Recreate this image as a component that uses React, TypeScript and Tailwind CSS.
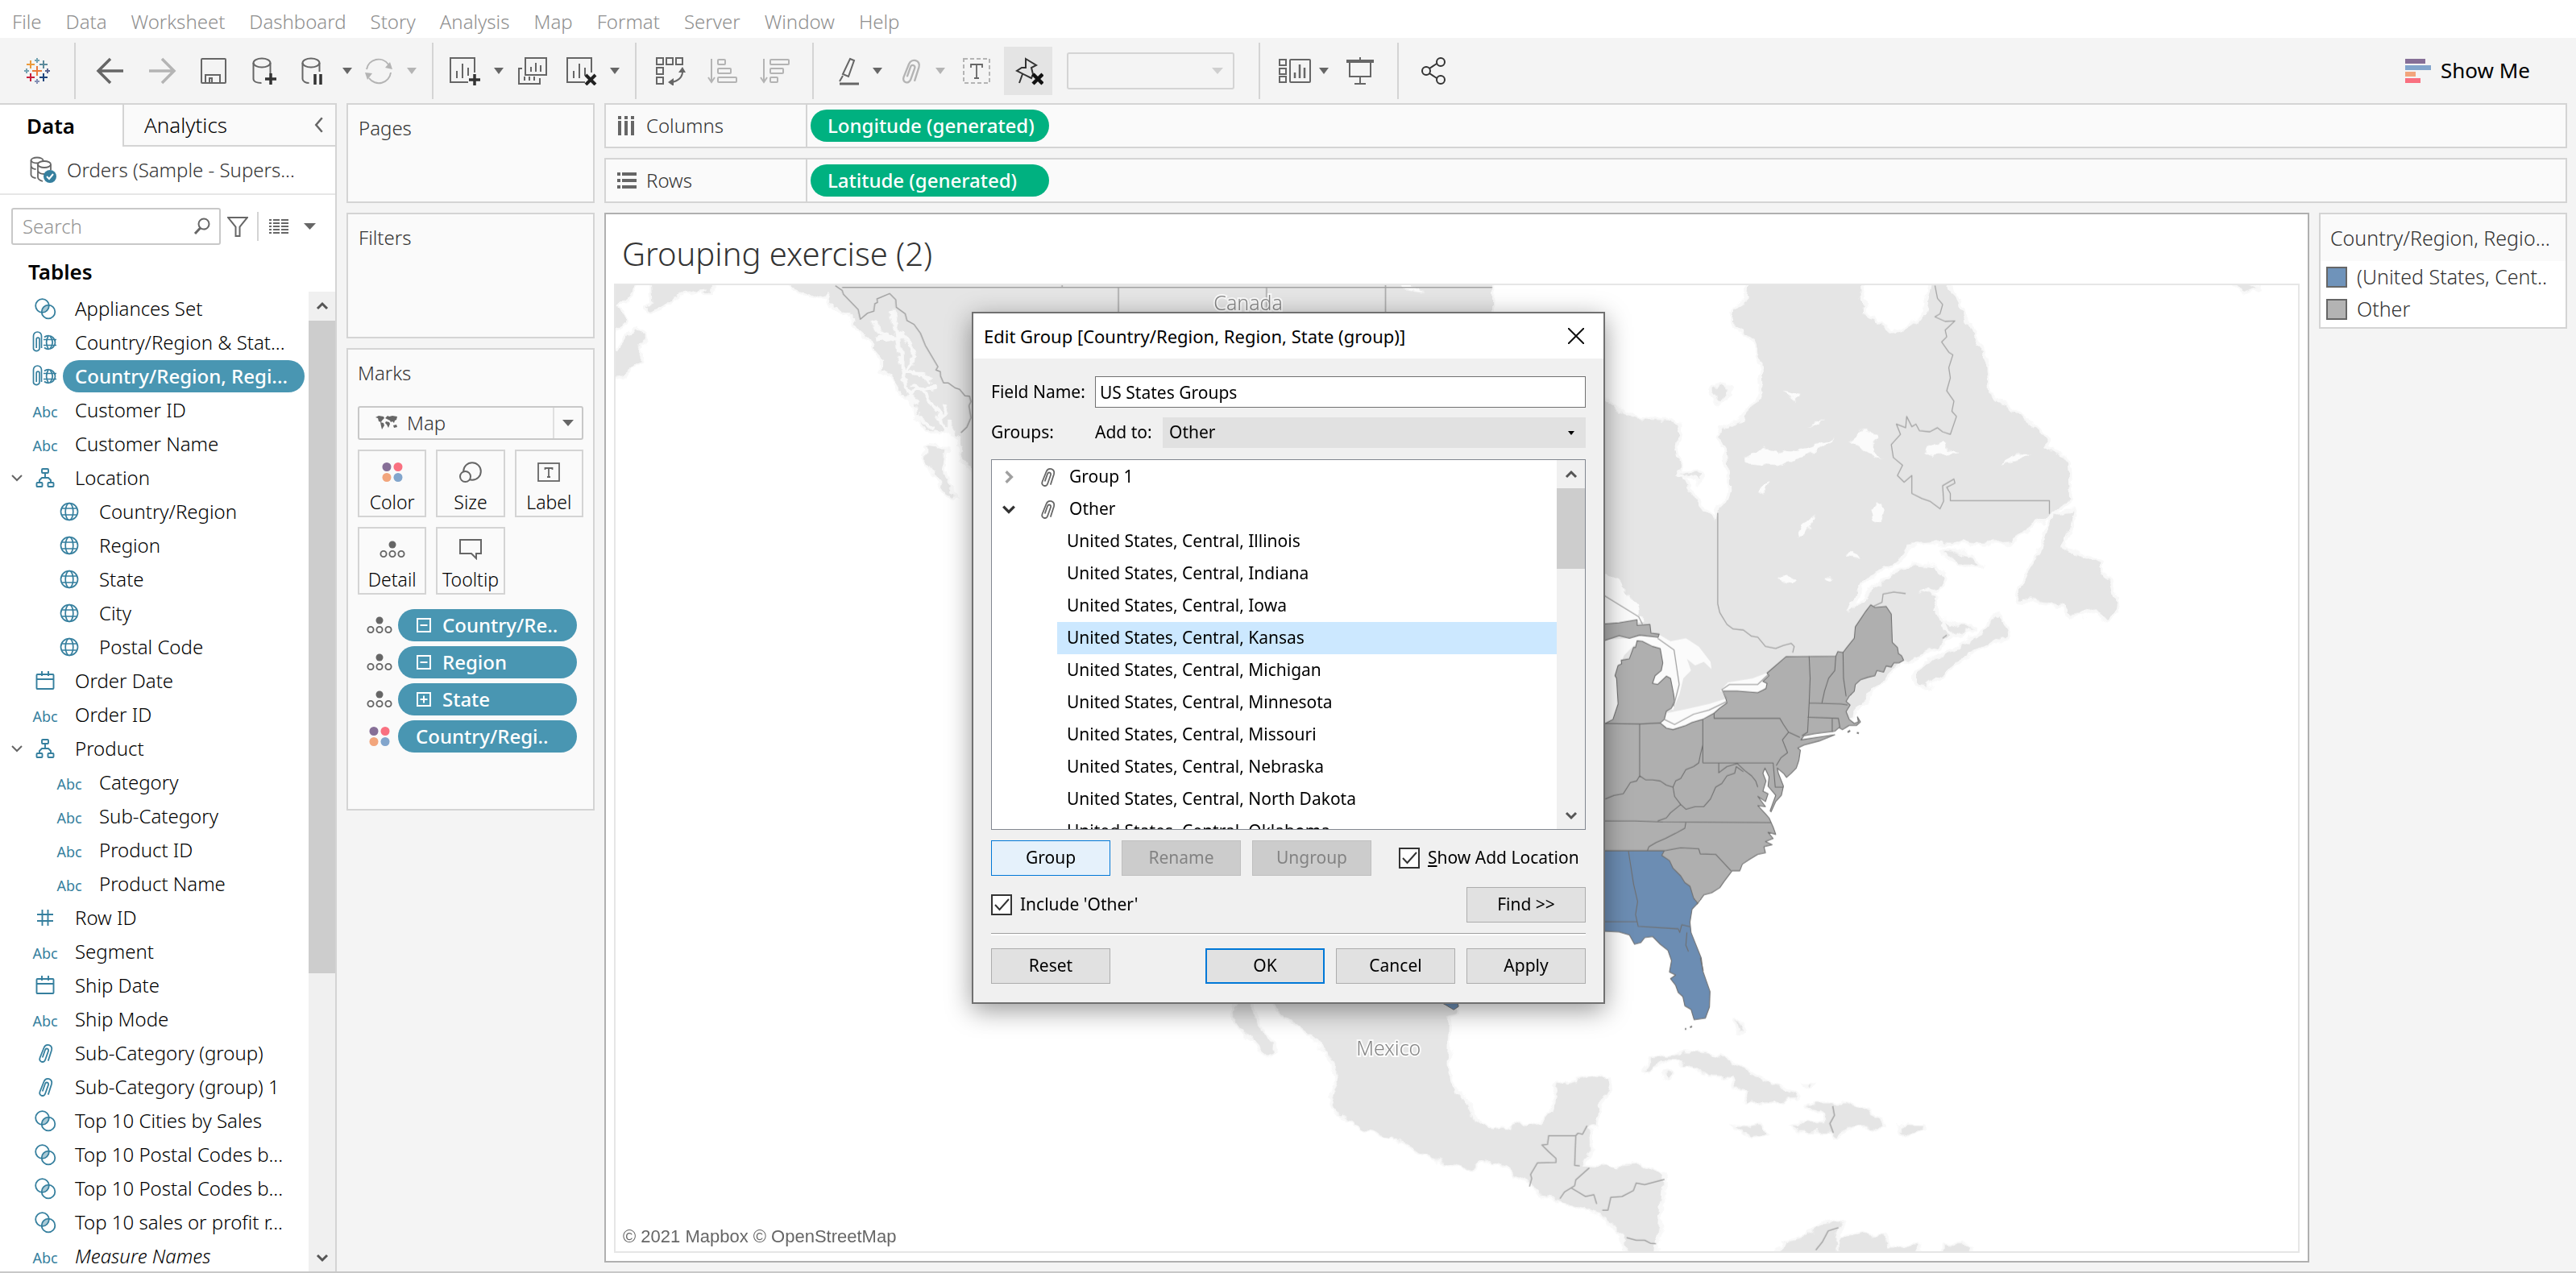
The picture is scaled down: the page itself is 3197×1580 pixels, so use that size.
import type { ReactNode } from "react";

const TEAL = "#357f9e";
const INK = "#666666";
const DIM = "#b4b4b4";

/* ---------- small shared drawings ---------- */

function Caret({ color = INK, w = 12 }: { color?: string; w?: number }) {
  return (
    <svg width={w} height="8" viewBox="0 0 12 8" preserveAspectRatio="none" className="shrink-0">
      <path d="M0 0h12L6 8z" fill={color} />
    </svg>
  );
}

function Chevron({ dir, color = "#555", size = 16, sw = 3 }: { dir: "up" | "down" | "left" | "right"; color?: string; size?: number; sw?: number }) {
  const d = { up: "M2 11l6-6 6 6", down: "M2 5l6 6 6-6", left: "M11 1L5 8l6 7", right: "M5 2l6 6-6 6" }[dir];
  return (
    <svg width={size} height={size} viewBox="0 0 16 16" className="shrink-0">
      <path d={d} fill="none" stroke={color} strokeWidth={sw} />
    </svg>
  );
}

function Clip({ color, size = 26 }: { color: string; size?: number }) {
  return (
    <svg width={size} height={size} viewBox="0 0 26 26" fill="none" stroke={color} strokeWidth="1.800" strokeLinecap="round">
      <path d="M17 22l4-12.500c2-7-7-9-9.500-3L6.500 19c-1.800 5 5 7 6.700 2.200L17 10.500c1-3-3-4.200-4-1.200l-3 8.500" />
    </svg>
  );
}

function Globe({ size = 24 }: { size?: number }) {
  return (
    <svg width={size} height={size} viewBox="0 0 24 24" fill="none" stroke={TEAL} strokeWidth="1.700">
      <circle cx="12" cy="12" r="10.500" />
      <ellipse cx="12" cy="12" rx="4.800" ry="10.500" />
      <path d="M2.500 8h19M2.500 16h19" />
    </svg>
  );
}

function SetIcon() {
  return (
    <svg width="28" height="28" viewBox="0 0 28 28" fill="none" stroke={TEAL} strokeWidth="1.800">
      <path d="M9.700 18.300A8.300 8.300 0 0 1 18.300 9.700A8.300 8.300 0 0 1 9.700 18.300z" fill="#a9c9d6" stroke="none" />
      <circle cx="10.500" cy="10.500" r="8.300" />
      <circle cx="18" cy="18" r="8.300" />
    </svg>
  );
}

function GeoGroup() {
  return (
    <svg width="32" height="28" viewBox="0 0 32 28" fill="none" stroke={TEAL} strokeWidth="1.700">
      <path d="M11.500 21V6a5 5 0 0 0-10 0v16a4 4 0 0 0 7.500 0V10a1.800 1.800 0 0 0-3.800 0v11" />
      <path d="M15 7.500a8.300 8.300 0 1 1 0 13M14 10.500h16M14 17.500h16" />
      <path d="M20 6c-3 5-3 11 0 16M22 6c4 5 4 11 0 16" />
    </svg>
  );
}

function Hierarchy() {
  return (
    <svg width="24" height="24" viewBox="0 0 24 24" fill="none" stroke={TEAL} strokeWidth="1.900">
      <rect x="8" y="1" width="8" height="5" rx="1" />
      <rect x="1.500" y="18" width="7" height="5" rx="1" />
      <rect x="15.500" y="18" width="7" height="5" rx="1" />
      <path d="M12 6v6M5 18v-3l3-3h8l3 3v3" />
    </svg>
  );
}

function CalendarIcon() {
  return (
    <svg width="24" height="24" viewBox="0 0 24 24" fill="none" stroke={TEAL} strokeWidth="1.900">
      <rect x="1.500" y="4" width="21" height="18" rx="1" />
      <path d="M1.500 10h21M8 0v6M16 0v6" />
    </svg>
  );
}

function HashIcon() {
  return (
    <svg width="22" height="22" viewBox="0 0 22 22" fill="none" stroke={TEAL} strokeWidth="1.900">
      <path d="M1 7h20M1 15h20M7.500 1v20M14.500 1v20" />
    </svg>
  );
}

function DetailIcon() {
  return (
    <svg width="32" height="22" viewBox="0 0 32 22" fill="none" stroke={INK} strokeWidth="1.900" className="shrink-0">
      <circle cx="16" cy="5" r="4.500" fill={INK} stroke="none" />
      <circle cx="5" cy="16.500" r="3.600" />
      <circle cx="16" cy="16.500" r="3.600" />
      <circle cx="27" cy="16.500" r="3.600" />
    </svg>
  );
}

function ColorDots() {
  return (
    <svg width="26" height="24" viewBox="0 0 26 24" className="shrink-0">
      <circle cx="6" cy="5.500" r="5.500" fill="#866f97" />
      <circle cx="20" cy="5.500" r="5.500" fill="#f97080" />
      <circle cx="6" cy="18.500" r="5.500" fill="#f2a57c" />
      <circle cx="20" cy="18.500" r="5.500" fill="#82a5cc" />
    </svg>
  );
}

/* ---------- menu and toolbar ---------- */

const MENU = ["File", "Data", "Worksheet", "Dashboard", "Story", "Analysis", "Map", "Format", "Server", "Window", "Help"];

function MenuBar() {
  return (
    <nav className="flex h-[47px] shrink-0 items-center gap-[30px] bg-white px-[15px] pt-1.5 text-[24px] text-[#8f8f8f]">
      {MENU.map((m) => (
        <button key={m} type="button">{m}</button>
      ))}
    </nav>
  );
}

function Tool({ label, children, className = "w-9" }: { label: string; children: ReactNode; className?: string }) {
  return (
    <button type="button" aria-label={label} className={`flex h-[60px] shrink-0 items-center justify-center ${className}`}>
      {children}
    </button>
  );
}

function Line() {
  return <div className="h-[70px] w-0.5 shrink-0 bg-[#d4d4d4]" />;
}

function I({ children, w = 34, color = INK }: { children: ReactNode; w?: number; color?: string }) {
  return (
    <svg width={w} height="36" viewBox={`0 0 ${w} 36`} fill="none" stroke={color} strokeWidth="2" className="shrink-0">
      {children}
    </svg>
  );
}

function TableauMark() {
  const plus = (x: number, y: number, r: number) => `M${x - r} ${y}h${2 * r}M${x} ${y - r}v${2 * r}`;
  return (
    <svg width="34" height="36" viewBox="0 0 34 36" fill="none" strokeWidth="2">
      <path d={plus(17, 18, 6)} stroke="#eb7a3b" />
      <path d={plus(9, 10, 5)} stroke="#eb9a3b" />
      <path d={plus(25, 10, 5)} stroke="#5b8a9b" />
      <path d={plus(9, 26, 5)} stroke="#c8203c" />
      <path d={plus(25, 26, 5)} stroke="#20457c" />
      <path d={plus(17, 5, 3)} stroke="#74a3b2" />
      <path d={plus(17, 31, 3)} stroke="#8590b5" />
      <path d={plus(4, 18, 3)} stroke="#74a3b2" />
      <path d={plus(30, 18, 3)} stroke="#5b6591" />
    </svg>
  );
}

function Toolbar() {
  return (
    <div className="flex h-[81px] shrink-0 items-center bg-[#f4f4f4] text-[26px]">
      <Tool label="Start page" className="w-[92px]"><TableauMark /></Tool>
      <Line />
      <div className="flex items-center pl-[25px] pr-[19px]">
        <Tool label="Undo" className="mr-7"><I w={36}><path d="M34 18H3M18 3L3 18l15 15" strokeWidth="3.500" /></I></Tool>
        <Tool label="Redo" className="mr-7"><I w={36} color={DIM}><path d="M2 18h31M18 3l15 15-15 15" strokeWidth="3.500" /></I></Tool>
        <Tool label="Save" className="mr-7">
          <I w={36}><rect x="3" y="3" width="30" height="30" rx="1" /><path d="M8 33V23h18v10M13 33v-6h3v6" /></I>
        </Tool>
        <Tool label="New data source" className="mr-6">
          <I w={36}><ellipse cx="14" cy="8" rx="10.500" ry="5.500" /><path d="M3.500 8v20c0 3 4 5 10 5M24.500 8v13" /><path d="M25 21v14M18 28h14" stroke="#333" strokeWidth="3.500" /></I>
        </Tool>
        <Tool label="Pause updates" className="mr-[18px]">
          <I w={36}><ellipse cx="15" cy="8" rx="10.500" ry="5.500" /><path d="M4.500 8v20c0 3 4 5 8 5M25.500 8v11" /><path d="M20 22v13M27 22v13" stroke="#333" strokeWidth="3.500" /></I>
        </Tool>
        <Caret />
        <Tool label="Run update" className="mr-[17px] ml-[15px]">
          <I w={36} color={DIM}><path d="M3 16a15 15 0 0 1 27-6M33 20a15 15 0 0 1-27 7" /><path d="M26 14l9 2-3-9zM10 21l-9-1 3 9z" fill={DIM} stroke="none" /></I>
        </Tool>
        <Caret color={DIM} />
      </div>
      <Line />
      <div className="flex items-center px-[19px]">
        <Tool label="New worksheet" className="mr-4 w-10">
          <I w={40}><path d="M24 32H2V2h30v18" /><path d="M10 27V18M17 27V9M24 24V14" /><path d="M32 22v14M25 29h14" stroke="#333" strokeWidth="3.500" /></I>
        </Tool>
        <Caret />
        <Tool label="Duplicate" className="mr-[22px] ml-[17px] w-[38px]">
          <I w={38}><rect x="10" y="2" width="26" height="21" /><path d="M17 19v-6M23 19V8M29 19v-8M6 15H2v19h26v-7M9 30v-5M15 30v-5M21 30v-5" /></I>
        </Tool>
        <Tool label="Clear sheet" className="mr-[15px] w-10">
          <I w={40}><path d="M24 32H2V2h30v18" /><path d="M10 27V18M17 27V9M24 24V14" /><path d="M25 23l12 12M37 23L25 35" stroke="#222" strokeWidth="4" /></I>
        </Tool>
        <Caret />
      </div>
      <Line />
      <div className="flex items-center gap-[27px] pr-[27px] pl-[23px]">
        <Tool label="Swap rows and columns" className="w-[38px]">
          <I w={38}><rect x="2" y="2" width="8" height="8" /><rect x="14" y="2" width="8" height="8" /><rect x="26" y="2" width="8" height="8" /><rect x="2" y="14" width="8" height="8" /><rect x="2" y="26" width="8" height="8" /><path d="M34 17c1 9-6 14-14 15" /><path d="M29 20l5-7 4 7zM23 27l-7 5 7 5z" fill={INK} stroke="none" /></I>
        </Tool>
        <Tool label="Sort ascending" className="w-[38px]">
          <I w={38} color={DIM}><path d="M5 3v28M1 26l4 6 4-6" /><rect x="13" y="4" width="9" height="6" rx="1" /><rect x="13" y="15" width="16" height="6" rx="1" /><rect x="13" y="26" width="23" height="6" rx="1" /></I>
        </Tool>
        <Tool label="Sort descending" className="w-[38px]">
          <I w={38} color={DIM}><path d="M5 3v28M1 26l4 6 4-6" /><rect x="13" y="4" width="23" height="6" rx="1" /><rect x="13" y="15" width="16" height="6" rx="1" /><rect x="13" y="26" width="9" height="6" rx="1" /></I>
        </Tool>
      </div>
      <Line />
      <div className="flex items-center pr-[30px] pl-6">
        <Tool label="Highlight" className="mr-[13px]">
          <I w={36}><path d="M21 3l5 2-7 20-7-3zM12 24l-4 7" /><path d="M8 34h24" strokeWidth="3" /></I>
        </Tool>
        <Caret />
        <Tool label="Group members" className="mr-3.5 ml-[18px]"><Clip color={DIM} size={34} /></Tool>
        <Caret color={DIM} />
        <Tool label="Show mark labels" className="mr-4 ml-[21px]">
          <I w={36}><rect x="2" y="3" width="32" height="30" strokeDasharray="5 3" stroke={DIM} /><path d="M11 14v-4h14v4M18 10v17M15 27h6" strokeWidth="1.800" /></I>
        </Tool>
        <Tool label="Fix axes" className="mr-[18px] w-[60px] bg-[#e4e4e4]">
          <I w={38} color="#333"><path d="M16 3l13 8-6 3 2 8-2 5-18-9 6-4 5 0zM12 22L8 33" /><path d="M25 22l12 12M37 22L25 34" stroke="#111" strokeWidth="4.500" /></I>
        </Tool>
        <button type="button" aria-label="Fit" className="flex h-[46px] w-[208px] items-center justify-end rounded-[3px] border-2 border-[#d4d4d4] pr-3">
          <Caret color="#cfcfcf" w={14} />
        </button>
      </div>
      <Line />
      <div className="flex items-center pr-7 pl-[23px]">
        <Tool label="Show/hide cards" className="mr-2.5 w-10">
          <I w={40}><rect x="1" y="4" width="8" height="7" /><rect x="1" y="15" width="8" height="7" /><rect x="1" y="25" width="8" height="7" /><rect x="14" y="4" width="25" height="28" rx="1" /><path d="M20 27v-7M26 27V10M32 27V14" strokeWidth="2.500" /></I>
        </Tool>
        <Caret />
        <Tool label="Presentation mode" className="ml-[21px]">
          <I w={36}><path d="M1 6h34" strokeWidth="4" /><path d="M5 8v17h26V8M18 1v4M18 25v9M11 34h14" /></I>
        </Tool>
      </div>
      <Line />
      <Tool label="Share" className="ml-[26px]">
        <I w={34} color="#333"><circle cx="8" cy="18" r="5" /><circle cx="26" cy="7" r="5" /><circle cx="26" cy="29" r="5" /><path d="M12 15l9-6M12 21l9 6" /></I>
      </Tool>
      <button type="button" className="ml-auto flex items-center gap-3 pr-[57px] font-normal text-black">
        <svg width="32" height="30" viewBox="0 0 32 30">
          <path d="M0 0h25v6H0z" fill="#866f97" />
          <path d="M0 8h32v6H0z" fill="#82a5cc" />
          <path d="M0 16h13v6H0z" fill="#f2a57c" />
          <path d="M0 24h19v6H0z" fill="#f97080" />
        </svg>
        Show Me
      </button>
    </div>
  );
}

/* ---------- data pane ---------- */

type Kind = "set" | "geogroup" | "abc" | "hier" | "globe" | "date" | "num" | "clip";
type Field = { k: Kind; t: string; nested?: boolean; selected?: boolean; italic?: boolean };

const FIELDS: Field[] = [
  { k: "set", t: "Appliances Set" },
  { k: "geogroup", t: "Country/Region & Stat..." },
  { k: "geogroup", t: "Country/Region, Regi...", selected: true },
  { k: "abc", t: "Customer ID" },
  { k: "abc", t: "Customer Name" },
  { k: "hier", t: "Location" },
  { k: "globe", t: "Country/Region", nested: true },
  { k: "globe", t: "Region", nested: true },
  { k: "globe", t: "State", nested: true },
  { k: "globe", t: "City", nested: true },
  { k: "globe", t: "Postal Code", nested: true },
  { k: "date", t: "Order Date" },
  { k: "abc", t: "Order ID" },
  { k: "hier", t: "Product" },
  { k: "abc", t: "Category", nested: true },
  { k: "abc", t: "Sub-Category", nested: true },
  { k: "abc", t: "Product ID", nested: true },
  { k: "abc", t: "Product Name", nested: true },
  { k: "num", t: "Row ID" },
  { k: "abc", t: "Segment" },
  { k: "date", t: "Ship Date" },
  { k: "abc", t: "Ship Mode" },
  { k: "clip", t: "Sub-Category (group)" },
  { k: "clip", t: "Sub-Category (group) 1" },
  { k: "set", t: "Top 10 Cities by Sales" },
  { k: "set", t: "Top 10 Postal Codes b..." },
  { k: "set", t: "Top 10 Postal Codes b..." },
  { k: "set", t: "Top 10 sales or profit r..." },
  { k: "abc", t: "Measure Names", italic: true },
];

function FieldIcon({ k }: { k: Kind }) {
  switch (k) {
    case "set": return <SetIcon />;
    case "geogroup": return <GeoGroup />;
    case "hier": return <Hierarchy />;
    case "globe": return <Globe />;
    case "date": return <CalendarIcon />;
    case "num": return <HashIcon />;
    case "clip": return <Clip color={TEAL} />;
    default: return <span className="pt-1 text-[18px] font-normal text-[#357f9e]">Abc</span>;
  }
}

function DataPane() {
  return (
    <aside className="flex w-[418px] shrink-0 flex-col border-t-2 border-r-2 border-[#d4d4d4] bg-white">
      <div className="flex h-[52px] shrink-0 text-[26px] text-black">
        <button type="button" className="w-[152px] pr-[26px] font-semibold">Data</button>
        <button type="button" className="flex flex-1 items-center justify-between border-b-2 border-l-2 border-[#d4d4d4] bg-[#fafafa] pr-2.5 pl-[25px]">
          Analytics
          <Chevron dir="left" size={20} sw={2} color={INK} />
        </button>
      </div>
      <div className="flex h-[60px] shrink-0 items-center gap-[13px] border-b-2 border-[#e6e6e6] pl-9 text-[24px] text-[#333]">
        <svg width="34" height="34" viewBox="0 0 34 34" fill="none" stroke={INK} strokeWidth="1.800">
          <ellipse cx="10" cy="5" rx="7.500" ry="3.500" />
          <path d="M2.500 5v18c0 2 3 4 6 4M2.500 12c1 3 4 4 6 4" />
          <ellipse cx="19" cy="10" rx="8" ry="4" fill="#fff" />
          <path d="M11 10v16c0 3 3 4 6 5M27 10v7M11 18c1 3 5 4 8 4" />
          <circle cx="26" cy="25" r="8" fill="#357f9e" stroke="none" />
          <path d="M22 25l3 3 5-6" stroke="#fff" strokeWidth="2" />
        </svg>
        Orders (Sample - Supers...
      </div>
      <div className="mt-4 flex shrink-0 items-center pl-3.5">
        <label className="flex h-[46px] w-[260px] items-center justify-between rounded-[3px] border-2 border-[#c8c8c8] pr-2.5 pl-3">
          <input aria-label="Search" placeholder="Search" className="w-[180px] bg-transparent text-[24px] font-light outline-none placeholder:text-[#949494]" />
          <svg width="22" height="22" viewBox="0 0 22 22" fill="none" stroke={INK} strokeWidth="2">
            <circle cx="13" cy="8" r="6.500" />
            <path d="M8.500 13L2 20" strokeWidth="3" />
          </svg>
        </label>
        <svg width="26" height="26" viewBox="0 0 26 26" fill="none" stroke={INK} strokeWidth="2" className="ml-2">
          <path d="M1 2h24l-9.500 11.500V25h-5V13.500z" />
        </svg>
        <div className="ml-[11px] h-9 w-0.5 bg-[#d4d4d4]" />
        <svg width="24" height="20" viewBox="0 0 24 20" stroke={INK} strokeWidth="2" className="ml-[13px]">
          <path d="M0 2h3M5 2h8M15 2h9M0 6h3M5 6h8M15 6h9M0 10h3M5 10h8M15 10h9M0 14h3M5 14h8M15 14h9M0 18h3M5 18h8M15 18h9" />
        </svg>
        <span className="ml-[19px]"><Caret w={15} /></span>
      </div>
      <h2 className="mt-4 h-[42px] shrink-0 pl-[35px] text-[26px] leading-[34px] font-semibold text-black">Tables</h2>
      <div className="flex min-h-0 flex-1">
        <ul className="min-w-0 flex-1 overflow-hidden text-[24px] text-black">
          {FIELDS.map((f, i) => (
            <li key={i} className="flex h-[42px] items-center">
              <span className={f.nested ? "w-[30px] shrink-0" : "hidden"} />
              <span className="flex w-10 shrink-0 pl-[13px]">{f.k === "hier" && <Chevron dir="down" size={16} sw={2} color={INK} />}</span>
              <span className="flex w-8 shrink-0 justify-center"><FieldIcon k={f.k} /></span>
              <button
                type="button"
                className={
                  f.selected
                    ? "ml-[6px] flex h-10 w-[300px] items-center rounded-full bg-[#4996b2] pl-[15px] font-medium whitespace-nowrap text-white"
                    : f.italic
                      ? "pl-[21px] whitespace-nowrap italic"
                      : "pl-[21px] whitespace-nowrap"
                }
              >
                {f.t}
              </button>
            </li>
          ))}
        </ul>
        <div className="flex w-[33px] shrink-0 flex-col items-center bg-[#f0f0f0]">
          <button type="button" aria-label="Scroll up" className="flex h-9 items-center"><Chevron dir="up" /></button>
          <div className="h-[810px] w-full bg-[#cdcdcd]" />
          <button type="button" aria-label="Scroll down" className="mt-auto flex h-[34px] items-center"><Chevron dir="down" /></button>
        </div>
      </div>
    </aside>
  );
}

/* ---------- cards ---------- */

const SHELF = "border-2 border-[#d4d4d4] bg-[#fafafa]";

function MarkButton({ label, children }: { label: string; children: ReactNode }) {
  return (
    <button type="button" className="flex h-[84px] flex-col items-center justify-between border-2 border-[#d4d4d4] pt-3 pb-px">
      <span className="flex h-7 items-center">{children}</span>
      <span className="text-[23px] leading-8 text-black">{label}</span>
    </button>
  );
}

const PILLS: { t: string; s?: "minus" | "plus" }[] = [
  { t: "Country/Re..", s: "minus" },
  { t: "Region", s: "minus" },
  { t: "State", s: "plus" },
  { t: "Country/Regi.." },
];

function Cards() {
  return (
    <div className="flex w-[308px] shrink-0 flex-col gap-3 text-[24px] text-[#333]">
      <section className={`${SHELF} h-[124px] px-[13px] pt-[11px]`}>Pages</section>
      <section className={`${SHELF} h-[156px] px-[13px] pt-[11px]`}>Filters</section>
      <section className={`${SHELF} h-[574px] px-3 pt-[11px]`}>
        <h3>Marks</h3>
        <button type="button" className="mt-[23px] flex h-[42px] w-full items-center rounded-[3px] border-2 border-[#c8c8c8] pl-5">
          <svg width="28" height="18" viewBox="0 0 28 18" fill={INK}>
            <path d="M0 2l4-2 6 1 1 2-3 3-1 2-3-1-1-4zM6 8l4 1 1 3-3 5-1-4zM12 3l3-3 2 1 4-1 6 1-1 4-2 1-1 3-2-2-2 1-1-2-2-1-2-1-2-1zM13 7l4 1 1 2-2 5-2-4-2-2zM22 12l4-1 1 3-4 1z" />
          </svg>
          <span className="ml-[11px]">Map</span>
          <span className="ml-auto flex h-full w-9 items-center justify-center border-l-2 border-[#e0e0e0]"><Caret w={14} /></span>
        </button>
        <div className="mt-3 grid grid-cols-3 gap-3">
          <MarkButton label="Color"><ColorDots /></MarkButton>
          <MarkButton label="Size">
            <svg width="28" height="26" viewBox="0 0 28 26" fill="none" stroke={INK} strokeWidth="2">
              <circle cx="16" cy="12" r="10.800" />
              <circle cx="7.500" cy="18.500" r="6.500" fill="#fafafa" />
            </svg>
          </MarkButton>
          <MarkButton label="Label">
            <svg width="28" height="24" viewBox="0 0 28 24" fill="none" stroke={INK} strokeWidth="1.800">
              <rect x="1" y="1" width="26" height="22" />
              <path d="M9.500 9V7h9v2M14 7v11M12 18h4" />
            </svg>
          </MarkButton>
          <MarkButton label="Detail"><DetailIcon /></MarkButton>
          <MarkButton label="Tooltip">
            <svg width="28" height="26" viewBox="0 0 28 26" fill="none" stroke={INK} strokeWidth="2">
              <path d="M1 1h26v17h-6v6l-6-6H1z" />
            </svg>
          </MarkButton>
        </div>
        <ul className="mt-[18px] flex flex-col gap-1.5 pr-2">
          {PILLS.map((p) => (
            <li key={p.t} className="flex h-10 items-center">
              <span className="flex w-[50px] shrink-0 justify-center pl-1">{p.s ? <DetailIcon /> : <ColorDots />}</span>
              <button type="button" className="flex h-full flex-1 items-center rounded-full bg-[#4996b2] pl-[22px] font-medium whitespace-nowrap text-white">
                {p.s && (
                  <svg width="20" height="18" viewBox="0 0 20 18" fill="none" stroke="#fff" strokeWidth="2" className="mr-[13px] shrink-0">
                    <rect x="2" y="1" width="16" height="16" />
                    <path d={p.s === "plus" ? "M5.500 9h9M10 4.500v9" : "M5.500 9h9"} />
                  </svg>
                )}
                {p.t}
              </button>
            </li>
          ))}
        </ul>
      </section>
    </div>
  );
}

function Shelf({ name, pill, icon }: { name: string; pill: string; icon: ReactNode }) {
  return (
    <div className={`${SHELF} flex h-14 shrink-0 items-center text-[24px]`}>
      <div className="flex h-full w-[250px] items-center gap-3 border-r-2 border-[#d4d4d4] pl-3.5 text-[#333]">
        {icon}
        {name}
      </div>
      <button type="button" className="ml-1 h-10 w-[296px] rounded-full bg-[#00b180] pl-[21px] text-left font-medium text-white">{pill}</button>
    </div>
  );
}

/* ---------- map ---------- */

const WATER = "#fbfbfb";

function MapDrawing() {
  return (
    <svg className="block h-full w-full" viewBox="762 352 2090 1200" preserveAspectRatio="xMinYMin slice" role="img" aria-label="Map of North America">
      <defs>
        <filter id="coast" x="-5%" y="-5%" width="110%" height="110%">
          <feTurbulence type="fractalNoise" baseFrequency="0.06" numOctaves="3" seed="4" result="n" />
          <feDisplacementMap in="SourceGraphic" in2="n" scale="14" xChannelSelector="R" yChannelSelector="G" />
        </filter>
      </defs>

      <g fill="#e5e5e5" stroke="#f8f8f8" strokeWidth="8" paintOrder="stroke" strokeLinejoin="round" filter="url(#coast)">
        {/* Alaska and the Pacific coast */}
        <g transform="translate(750 260) scale(0.3333)" strokeWidth="20">
          <path d="M0 220H118L105 300 65 330 40 355 70 385 72 412 40 435 0 440z" />
          <path d="M165 220H405L395 300 375 300 388 283 330 290 285 300 250 325 225 350 160 375 150 355 172 330z" />
          <path d="M112 440L148 468 120 490 132 515 130 555 95 580 60 610 0 620 0 530 60 512 80 480z" />
          <path d="M590 220H3303V500H1500V980L1368 965 1335 920 1322 880 1325 840 1300 830 1288 800 1245 822 1195 815 1155 760 1145 690 1100 680 1060 610 1030 592 1030 550 1000 515 985 480 940 440 910 390 825 345 835 290 810 320 740 300 700 285z" />
          <path d="M1190 880L1265 885 1255 950 1265 990 1300 1065 1265 1040 1222 975 1190 930z" />
        </g>
        {/* eastern Canada */}
        <g transform="translate(1900 330) scale(0.6378)" strokeWidth="12">
          <path d="M100 250L143 260 200 295 270 298 285 310 280 350 290 400 305 430 340 480 360 490 365 465 380 450 385 430 378 350 362 325 410 295 448 248 446 180 430 140 390 105 395 80 420 60 425 10H640L645 90 670 105 700 130 725 125 765 95 770 60 780 10H800L870 150 885 190 890 245 920 270 950 290 1000 330 1000 350 1045 380 1048 450 1010 480 970 505 930 532 880 536 800 532 735 540 710 575 670 590 640 620 615 672 640 655 660 630 700 600 750 583 790 585 803 605 790 625 750 630 790 640 782 665 800 700 812 712 790 740 740 760 700 780 600 900 200 900 100 700z" />
          <path d="M1015 485L1052 475 1045 510 1030 545 1060 560 1110 575 1108 600 1130 612 1138 650 1125 690 1100 665 1050 680 1035 655 945 645 965 600 990 560z" />
          <path d="M750 785L800 755 860 728 882 705 910 678 928 715 890 735 860 745 800 790 765 818 750 808z" />
          <path d="M800 550L850 560 875 580 830 578zM805 690L830 700 862 702 840 714 812 706zM350 240L372 232 386 236 365 262zM290 398L326 404 326 416z" />
          <path d="M1355 20L1412 38 1385 48z" />
        </g>
        {/* Mexico, Central America and the Caribbean */}
        <g transform="translate(1500 1180) scale(0.7015 0.3333)" strokeWidth="12">
          <path d="M118 150H440L436 230 422 240 418 420 430 500 450 550 470 630 505 665 550 645 590 640 605 600 615 495 680 465 705 475 708 500 690 570 685 650 670 660 672 740 658 795 700 800 765 795 800 830 803 860 798 960 788 1130H738L735 1060 690 970 620 925 590 910 560 850 520 790 490 780 460 810 420 790 330 700 270 655 230 600 215 540 228 490 215 400 180 310 150 260 120 225z" />
          <path d="M45 150H68L80 270 100 310 115 370 100 385 70 310 45 265z" />
          <path d="M768 450L785 395 840 372 885 380 940 430 985 490 1010 505 1038 550 950 568 960 520 930 510 925 465 890 460 835 420 840 400 810 400 780 440z" />
          <path d="M1060 568H1130L1160 590 1185 620 1190 655 1130 650 1110 692 1098 665 1045 668 1033 645 1090 645 1088 600z" />
          <path d="M807 447L818 455 812 480zM930 650L975 650 985 680 960 688zM1225 648L1260 650 1265 665 1240 680 1225 675zM932 255L944 275 940 300zM1058 490L1068 488 1060 502z" />
          <path d="M1005 1130L1020 1075 1060 1060 1100 1000 1118 1005 1108 1080 1112 1130zM1112 1130L1115 1070 1150 1048 1190 1055 1195 1100 1250 1100 1255 1130zM1300 1095H1345V1130H1300z" />
        </g>
      </g>

      {/* fjords and inland water */}
      <g fill={WATER} filter="url(#coast)">
        <g transform="translate(750 260) scale(0.3333)" fill="none" stroke="#f8f8f8" strokeWidth="15" strokeLinejoin="round">
          <path d="M1063 375L1090 460 1100 540 1105 600 1125 670 1160 720M995 405L1025 455 1080 475M1000 478L1100 465 1140 500 1150 550 1110 600 1170 605 1218 635M1125 672L1225 655M1140 640L1190 680 1240 760 1290 830M1267 720L1250 790M1160 765L1215 810M1290 780V820" />
        </g>
        <g transform="translate(1900 330) scale(0.6378)">
          <path d="M-265 26L-240 32 -205 48 -255 42zM415 370L450 350 500 358 545 350 592 330 570 348 540 365 480 385 420 380zM620 340L650 315 675 330 660 345 680 375 640 350zM762 358L800 335 808 350 828 360 780 368zM658 475L672 460 690 478 684 495 666 492zM520 525L530 500 556 485 540 505 530 525zM490 240L520 248 516 260zM920 385L940 362 970 360 945 378zM480 610L495 598 515 608 505 618zM535 308L570 295 555 308zM608 565L625 552 640 572zM442 432L460 418 452 440zM568 605L585 605 580 614z" />
          <path d="M100 600H165L185 640 210 655 216 692 100 700z" />
        </g>
      </g>

      {/* Great Lakes, United States fills and borders */}
      <g transform="translate(1900 330) scale(0.6378)" strokeLinejoin="round">
        <g fill={WATER}>
          <path d="M195 715L248 715 270 728 300 722 325 738 348 768 350 782 335 768 318 775 302 762 310 785 295 800 288 830 275 862 230 830z" />
          <path d="M143 725L215 720 180 755 165 790 168 850 158 880 143 888z" />
          <path d="M245 890L262 868 300 860 345 850 384 838 370 860 335 884 300 900 270 904z" />
          <path d="M366 825L382 808 430 800 462 788 462 812 440 830 380 828z" />
        </g>
        <g fill="#afafaf" stroke="#6f6f6f" strokeWidth="1.700">
          <path d="M130 695L170 692 205 686 205 697 230 695 232 712 248 714 246 720 210 716 190 722 170 717 143 726 130 728z" />
          <path d="M130 888L143 888 158 880 168 850 165 800 162 795 168 775 175 772 174 765 190 762 198 740 202 740 205 727 215 728 235 738 250 742 255 770 252 785 240 795 235 810 245 812 262 796 270 800 276 830 278 845 272 858 262 864 258 880 250 887 262 897 275 900 300 892 312 886 333 880 355 868 366 858 380 848 378 840 372 825 400 825 440 828 456 820 458 810 450 806 462 795 458 790 495 758 592 757 596 748 606 750 612 742 628 722 630 700 640 685 650 670 660 657 668 662 690 660 700 675 702 730 712 740 714 752 720 756 724 765 715 770 705 770 700 778 690 776 685 788 672 785 668 795 655 798 640 803 630 812 628 825 618 835 612 845 620 852 612 865 618 880 628 888 636 885 634 875 640 885 632 892 618 892 605 900 598 896 590 903 550 908 530 912 524 920 550 916 590 910 560 922 530 930 518 936 523 940 520 960 515 975 505 985 496 993 490 985 478 975 480 985 490 1010 486 1028 475 1040 466 1060 464 1058 475 1028 460 1010 462 992 454 975 450 985 456 1000 450 1020 460 1025 455 1040 440 1030 455 1050 440 1048 456 1065 462 1072 466 1081 470 1090 475 1104 460 1100 470 1112 455 1118 468 1124 452 1128 455 1140 440 1143 425 1152 410 1162 405 1175 390 1175 375 1195 366 1208 350 1218 335 1222 322 1240 130 1240z" />
        </g>
        <path
          d="M130 1136H258L253 1145 268 1155 275 1170 290 1185 298 1198 308 1205 315 1228 323 1238 312 1250 308 1275 310 1295 318 1315 330 1345 333 1370 347 1410 346 1440 338 1462 316 1465 310 1445 298 1438 294 1420 285 1412 280 1398 270 1385 280 1378 268 1372 272 1350 265 1330 250 1318 235 1303 220 1305 212 1315 200 1318 190 1300 170 1294 130 1292z"
          fill="#6c8db3"
          stroke="#6f6f6f"
          strokeWidth="1.700"
        />
        <path
          d="M143 888L210 889V990M210 889L250 887M333 880V965M333 930L328 950 325 965 315 972 300 978 290 995 280 1000 275 1012 262 1008 250 1000 235 998 222 998 210 990 204 1000 192 1003 178 1025 160 1028 143 1035M333 965H470L474 1012H490M355 868V878H483L490 890 500 905 488 920 498 945 485 955 476 970M500 905L522 915M540 757L542 800 540 850 537 905 526 912M540 848L602 850 615 852M537 876L597 878 600 896M585 878V905M592 757L590 785 578 800 570 825 565 848M606 748L607 800 612 835M364 965V984L380 972 400 966 415 980 428 990 436 1000 440 1012M275 1012L278 1030 290 1046 300 1055 318 1050 335 1050 348 1035 358 1012 370 1005 380 990 395 985 398 972 412 982M290 1046L270 1062 262 1072 245 1078M130 1078L200 1078 255 1080 466 1081M300 1080L298 1092 280 1102 260 1112 242 1120 228 1128 225 1136M130 1136H258L290 1130 325 1132 328 1142 358 1143 388 1175M188 1136L198 1200 206 1235 202 1260 207 1283 285 1288 288 1295 292 1280 308 1284M130 1274H205M302 1295L300 1320 305 1332M328 1345L334 1370"
          fill="none"
          stroke="#6f6f6f"
          strokeWidth="1.700"
        />
        <g fill="none" stroke="#a3a3a3" strokeWidth="2">
          <path d="M362 478V655L366 672 380 695 392 704 412 706 428 718 440 720 455 738 475 742 490 736 505 732 511 738 508 750M785 35L790 60 800 72 795 90 785 96 805 105 824 104 805 122 808 135 798 145 812 165 820 170 812 195 815 215 808 240 822 260 818 280 827 290 815 325 800 320 790 312 775 320 755 318 748 305 740 310 730 290 728 312 710 305 718 325 700 345 704 370 722 385 712 405 725 418 740 405 740 440 760 450 775 455 795 470 802 455 800 425 822 412 824 420 808 428 815 440V454H1008V480M665 660L682 652 684 636 705 632 728 635M800 722L808 716" />
          <path d="M120 628L143 640 208 680 216 696M245 722L277 745 287 812 276 855M258 880L278 890 315 870 345 862 380 845M380 840L370 822 385 812H440L460 793" />
        </g>
        <path d="M308 1480l4-2M298 1483l3 0M615 905l5-3M633 906l4 1" stroke="#6f6f6f" strokeWidth="3" />
      </g>

      <g fill="none" stroke="#a3a3a3" strokeWidth="1.500" strokeLinejoin="round">
        <g transform="translate(750 260) scale(0.3333)" strokeWidth="4.500">
          <path d="M855 278L880 295 885 310 940 367 948 403 975 380 998 373 1002 345 1012 340 1010 327 1057 307 1080 330 1082 358 1115 382 1122 408 1148 422 1172 455 1190 500 1237 580 1230 592 1246 598 1247 615 1258 640 1275 640 1300 658 1318 664 1338 688 1355 690 1360 710 1353 725 1360 770 1345 805 1323 826M880 284H3303" />
          <path d="M1910 284V400M2462 284V400M2905 270V400M1700 270V284" />
        </g>
        <g transform="translate(1500 1180) scale(0.7015 0.3333)">
          <path vectorEffect="non-scaling-stroke" d="M668 648L660 680 652 676 648 685H600L598 718 588 720 600 745 613 770V785L580 787 568 830 570 845 566 875M648 685L646 796 655 798M672 805L648 850 646 872 628 895 620 920M640 880L652 895 665 912 680 905 685 940M695 963H705L710 915 730 912 750 890 755 862 770 868 805 848M738 1065L755 1075 770 1075 780 1086 790 1088M1103 575L1106 610 1098 640 1104 675M1113 1028L1095 1040 1085 1080 1073 1112" />
        </g>
      </g>
      <path d="M1782 1240h25l2 8-6 4-10-6z" fill="#6c8db3" stroke="#6f6f6f" />

      <g fontFamily="'Noto Sans', sans-serif" fontSize="25" fill="#858585" stroke="#fff" strokeWidth="4" strokeOpacity="0.800" paintOrder="stroke">
        <text x="1505" y="383">Canada</text>
        <text x="1682" y="1309">Mexico</text>
      </g>
    </svg>
  );
}

/* ---------- dialog ---------- */

const STATES = ["Illinois", "Indiana", "Iowa", "Kansas", "Michigan", "Minnesota", "Missouri", "Nebraska", "North Dakota", "Oklahoma"];
const BTN = "h-11 w-[148px] border border-[#adadad] bg-[#e1e1e1]";

function Check({ id, label, accel }: { id: string; label: string; accel?: boolean }) {
  return (
    <label htmlFor={id} className="flex items-center gap-2.5">
      <span className="relative flex">
        <input id={id} type="checkbox" defaultChecked className="h-[26px] w-[26px] appearance-none border-2 border-[#333] bg-white" />
        <svg width="26" height="26" viewBox="0 0 26 26" fill="none" stroke="#333" strokeWidth="2" className="pointer-events-none absolute inset-0">
          <path d="M5 13l5.500 6L22 6" />
        </svg>
      </span>
      <span>{accel ? <><u className="underline-offset-2">{label[0]}</u>{label.slice(1)}</> : label}</span>
    </label>
  );
}

function EditGroupDialog() {
  return (
    <div
      role="dialog"
      aria-label="Edit Group"
      className="absolute top-[387px] left-[1206px] flex w-[786px] flex-col border-2 border-[#707070] bg-[#f0f0f0] font-['Noto_Sans','Open_Sans',sans-serif] text-[21px] font-normal text-black shadow-[0_8px_30px_rgba(0,0,0,0.4)]"
    >
      <div className="flex h-14 items-center justify-between bg-white pr-6 pl-[13px] text-[22px]">
        <span>Edit Group [Country/Region, Region, State (group)]</span>
        <button type="button" aria-label="Close">
          <svg width="20" height="20" viewBox="0 0 20 20" stroke="#111" strokeWidth="2"><path d="M0 0l20 20M20 0L0 20" /></svg>
        </button>
      </div>
      <div className="flex flex-col px-[22px] pt-[22px] pb-[23px]">
        <div className="flex h-[39px] items-center">
          <label htmlFor="fname" className="w-[129px]">Field Name:</label>
          <input id="fname" defaultValue="US States Groups" className="h-full min-w-0 flex-1 border border-[#707070] bg-white px-[5px]" />
        </div>
        <div className="mt-3 flex h-[38px] items-center">
          <span className="w-[129px]">Groups:</span>
          <label htmlFor="addto" className="w-[84px]">Add to:</label>
          <span className="relative flex h-full flex-1 items-center">
            <select id="addto" className="h-full w-full appearance-none bg-[#e1e1e1] px-2">
              <option>Other</option>
            </select>
            <svg width="8" height="5" viewBox="0 0 8 5" className="pointer-events-none absolute right-[14px]"><path d="M0 0h8L4 5z" /></svg>
          </span>
        </div>
        <div className="mt-3.5 flex h-[460px] border border-[#828790] bg-white">
          <ul className="min-w-0 flex-1 overflow-hidden pt-px">
            {["Group 1", "Other"].map((g, i) => (
              <li key={g} className="flex h-10 items-center">
                <span className="flex w-[42px] justify-center"><Chevron dir={i ? "down" : "right"} sw={3} size={18} color={i ? "#333" : "#a0a0a0"} /></span>
                <span className="flex w-[54px] justify-center"><Clip color={INK} size={26} /></span>
                {g}
              </li>
            ))}
            {STATES.map((s) => (
              <li key={s} className={s === "Kansas" ? "ml-[81px] flex h-10 items-center bg-[#cce8ff] pl-3" : "ml-[81px] flex h-10 items-center pl-3"}>
                United States, Central, {s}
              </li>
            ))}
          </ul>
          <div className="flex w-[35px] flex-col items-center bg-[#f0f0f0]">
            <button type="button" aria-label="Scroll list up" className="flex h-[35px] items-center"><Chevron dir="up" /></button>
            <div className="h-[100px] w-full bg-[#cdcdcd]" />
            <button type="button" aria-label="Scroll list down" className="mt-auto flex h-[34px] items-center"><Chevron dir="down" /></button>
          </div>
        </div>
        <div className="mt-[13px] flex items-center gap-3.5">
          <button type="button" className="h-11 w-[148px] border border-[#0078d7] bg-[#e5f1fb]">Group</button>
          <button type="button" disabled className="h-11 w-[148px] border border-[#bfbfbf] bg-[#cccccc] text-[#838383]">Rename</button>
          <button type="button" disabled className="h-11 w-[148px] border border-[#bfbfbf] bg-[#cccccc] text-[#838383]">Ungroup</button>
          <div className="ml-5"><Check id="loc" label="Show Add Location" accel /></div>
        </div>
        <div className="mt-3.5 flex items-center justify-between">
          <Check id="incl" label="Include 'Other'" />
          <button type="button" className={BTN}>Find &gt;&gt;</button>
        </div>
        <div className="mt-[13px] h-[3px] border-t border-[#a0a0a0] bg-white" />
        <div className="mt-4 flex gap-3.5">
          <button type="button" className={BTN}>Reset</button>
          <button type="button" className="ml-auto h-11 w-[148px] border-2 border-[#0078d7] bg-[#e1e1e1]">OK</button>
          <button type="button" className={BTN}>Cancel</button>
          <button type="button" className={BTN}>Apply</button>
        </div>
      </div>
    </div>
  );
}

/* ---------- page ---------- */

export default function App() {
  return (
    <div className="relative flex h-screen flex-col overflow-hidden bg-[#f4f4f4] font-['Noto_Sans','Open_Sans',sans-serif] font-light">
      <MenuBar />
      <Toolbar />
      <div className="flex min-h-0 flex-1 gap-3 border-b-2 border-[#c8c8c8]">
        <DataPane />
        <Cards />
        <main className="flex min-w-0 flex-1 flex-col gap-3 pr-[11px]">
          <Shelf
            name="Columns"
            pill="Longitude (generated)"
            icon={<svg width="24" height="24" viewBox="0 0 24 24" stroke={INK} strokeWidth="4"><path d="M3 0v4M11 0v4M19 0v4M3 6v18M11 6v18M19 6v18" /></svg>}
          />
          <Shelf
            name="Rows"
            pill="Latitude (generated)"
            icon={<svg width="24" height="24" viewBox="0 0 24 24" stroke={INK} strokeWidth="4"><path d="M0 4h4M0 12h4M0 20h4M6 4h18M6 12h18M6 20h18" /></svg>}
          />
          <div className="flex min-h-0 flex-1 gap-3 pb-[11px]">
            <section className="flex min-w-0 flex-1 flex-col border-2 border-[#b0b0b0] bg-white px-2.5 pb-2.5">
              <h1 className="h-[86px] shrink-0 pl-2.5 text-[40px] leading-[98px] text-[#333]">Grouping exercise (2)</h1>
              <div className="relative min-h-0 flex-1 border-2 border-[#e6e6e6]">
                <MapDrawing />
                <a href="#attribution" className="absolute bottom-0.5 left-[9px] font-['Liberation_Sans',sans-serif] text-[22px] font-normal text-[#666]">© 2021 Mapbox © OpenStreetMap</a>
              </div>
            </section>
            <aside className="w-[308px] shrink-0 self-start border-2 border-[#d4d4d4] bg-white text-[25px] text-[#333]">
              <h3 className="h-[58px] bg-[#fafafa] pl-3 leading-[58px] whitespace-nowrap">Country/Region, Regio...</h3>
              <ul className="px-[7px] pb-0.5">
                <li className="flex h-10 items-center gap-3 whitespace-nowrap"><span className="h-[26px] w-[26px] shrink-0 border-2 border-[#666] bg-[#6f93ba]" />(United States, Cent..</li>
                <li className="flex h-10 items-center gap-3"><span className="h-[26px] w-[26px] shrink-0 border-2 border-[#666] bg-[#b3b3b3]" />Other</li>
              </ul>
            </aside>
          </div>
        </main>
      </div>
      <EditGroupDialog />
    </div>
  );
}
